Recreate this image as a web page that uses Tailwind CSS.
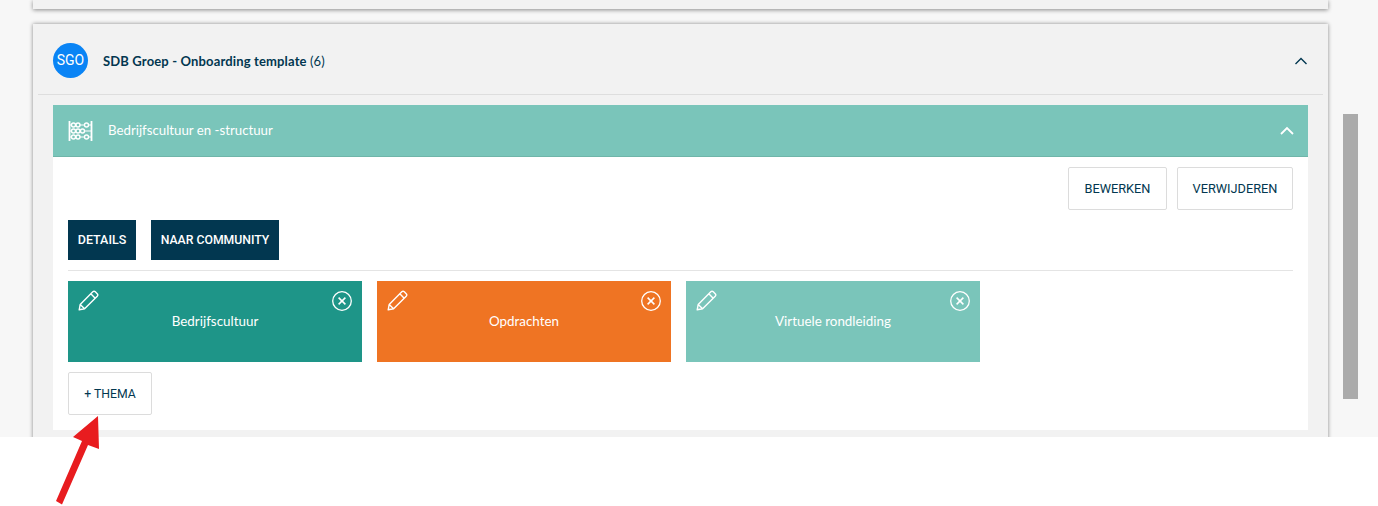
<!DOCTYPE html>
<html lang="nl">
<head>
<meta charset="utf-8">
<title>Onboarding template</title>
<script src="https://cdn.jsdelivr.net/npm/@tailwindcss/browser@4"></script>
</head>
<body class="bg-white font-['Lato','Noto_Sans',sans-serif] text-[#023750]">
<div class="relative h-[506px] w-[1378px] overflow-hidden">
    <div class="h-[437px] overflow-hidden bg-[#f7f7f7] pl-[33px] pr-[50px]">
        <!-- previous card, cut off at the top -->
        <div class="h-[9px] bg-[#f2f2f2] shadow-[0_1px_4px_rgba(0,0,0,0.45)]"></div>

        <div class="mt-[15px] h-[460px] bg-[#f2f2f2] px-[5px] shadow-[0_0_4px_rgba(0,0,0,0.45)]">
            <div class="flex h-[71px] items-center border-b border-[#dedede] pl-[15px] pr-[15px] pt-[3px]">
                <div class="flex h-[35px] w-[35px] items-center justify-center rounded-full bg-[#0a84f5] font-['Roboto',sans-serif] text-[14px] text-white">SGO</div>
                <span class="ml-[15px] mt-[3px] text-[13px] font-bold tracking-[0.15px]">SDB Groep - Onboarding template <span class="font-normal">(6)</span></span>
                <svg class="ml-auto" width="14" height="9" viewBox="0 0 14 9" fill="none" stroke="#023750" stroke-width="1.4"><path d="M1.500 8l5.500-5.500 5.500 5.500"/></svg>
            </div>

            <div class="mx-[15px] mt-[10px]">
                <div class="flex h-[52px] items-center border-b border-[#6fb5a9] bg-[#7ac5ba] pl-[15px] pr-[14px] text-white">
                    <svg width="25" height="22" viewBox="0 0 25 22" fill="none" stroke="#fff" stroke-width="1.4">
                        <path d="M1.500 1v20M23.500 1v20" stroke-width="1.800"/>
                        <path d="M1 5h23M1 11h23M1 17h23" stroke-width="1.200"/>
                        <g fill="#7ac5ba"><circle cx="5.500" cy="5" r="2"/><circle cx="10" cy="5" r="2"/><circle cx="18.500" cy="5" r="2"/><circle cx="5.500" cy="11" r="2"/><circle cx="10" cy="11" r="2"/><circle cx="14.500" cy="11" r="2"/><circle cx="5.500" cy="17" r="2"/><circle cx="10" cy="17" r="2"/><circle cx="18.500" cy="17" r="2"/></g>
                    </svg>
                    <span class="ml-[15px] text-[13.25px]">Bedrijfscultuur en -structuur</span>
                    <svg class="ml-auto" width="14" height="9" viewBox="0 0 14 9" fill="none" stroke="#fff" stroke-width="1.8"><path d="M1 8l6-6 6 6"/></svg>
                </div>

                <div class="h-[273px] bg-white px-[15px] pt-[10px]">
                    <div class="flex justify-end gap-[10px] font-['Roboto',sans-serif]">
                        <button class="h-[43px] w-[99px] rounded-[2px] border border-[#dcdcdc] text-[12.75px]">BEWERKEN</button>
                        <button class="h-[43px] w-[116px] rounded-[2px] border border-[#dcdcdc] text-[12.75px]">VERWIJDEREN</button>
                    </div>
                    <div class="mt-[10px] flex gap-[15px] border-b border-[#e4e4e4] pb-[10px] font-['Roboto',sans-serif]">
                        <button class="h-[40px] w-[68px] bg-[#023750] text-[12.5px] font-medium text-white">DETAILS</button>
                        <button class="h-[40px] w-[128px] bg-[#023750] text-[12.25px] font-medium text-white">NAAR COMMUNITY</button>
                    </div>
                    <div class="mt-[10px] flex gap-[15px]">
                        <div class="relative flex h-[81px] w-[294px] items-center justify-center bg-[#1e9588] text-[13.4px] text-white">
                            <svg class="absolute left-[10px] top-[9px]" width="21" height="21" viewBox="0 0 21 21" fill="none" stroke="#fff" stroke-width="1.4" stroke-linejoin="round"><path d="M1.200 19.800l1-5.400L14.800 1.800a1.800 1.800 0 0 1 2.500 0l1.900 1.900a1.800 1.800 0 0 1 0 2.500L6.600 18.800zM2.200 14.400l4.400 4.400M12.800 3.800l4.400 4.400"/></svg>
                            <svg class="absolute right-[10px] top-[10px]" width="20" height="20" viewBox="0 0 20 20" fill="none" stroke="#fff"><circle cx="10" cy="10" r="9.300" stroke-width="1.300"/><path d="M6.600 6.600l6.800 6.800M13.400 6.600l-6.800 6.800" stroke-width="1.500"/></svg>
                            Bedrijfscultuur
                        </div>
                        <div class="relative flex h-[81px] w-[294px] items-center justify-center bg-[#ef7423] text-[13.4px] text-white">
                            <svg class="absolute left-[10px] top-[9px]" width="21" height="21" viewBox="0 0 21 21" fill="none" stroke="#fff" stroke-width="1.4" stroke-linejoin="round"><path d="M1.200 19.800l1-5.400L14.800 1.800a1.800 1.800 0 0 1 2.500 0l1.900 1.900a1.800 1.800 0 0 1 0 2.500L6.600 18.800zM2.200 14.400l4.400 4.400M12.800 3.800l4.400 4.400"/></svg>
                            <svg class="absolute right-[10px] top-[10px]" width="20" height="20" viewBox="0 0 20 20" fill="none" stroke="#fff"><circle cx="10" cy="10" r="9.300" stroke-width="1.300"/><path d="M6.600 6.600l6.800 6.800M13.400 6.600l-6.800 6.800" stroke-width="1.500"/></svg>
                            Opdrachten
                        </div>
                        <div class="relative flex h-[81px] w-[294px] items-center justify-center bg-[#7ac5ba] text-[13.4px] text-white">
                            <svg class="absolute left-[10px] top-[9px]" width="21" height="21" viewBox="0 0 21 21" fill="none" stroke="#fff" stroke-width="1.4" stroke-linejoin="round"><path d="M1.200 19.800l1-5.400L14.800 1.800a1.800 1.800 0 0 1 2.500 0l1.900 1.900a1.800 1.800 0 0 1 0 2.500L6.600 18.800zM2.200 14.400l4.400 4.400M12.800 3.800l4.400 4.400"/></svg>
                            <svg class="absolute right-[10px] top-[10px]" width="20" height="20" viewBox="0 0 20 20" fill="none" stroke="#fff"><circle cx="10" cy="10" r="9.300" stroke-width="1.300"/><path d="M6.600 6.600l6.800 6.800M13.400 6.600l-6.800 6.800" stroke-width="1.500"/></svg>
                            Virtuele rondleiding
                        </div>
                    </div>
                    <button class="mt-[10px] h-[43px] w-[84px] rounded-[2px] border border-[#dcdcdc] pt-px font-['Roboto',sans-serif] text-[12.25px]">+ THEMA</button>
                </div>
            </div>
        </div>
    </div>

    <!-- scrollbar thumb -->
    <div class="absolute left-[1343px] top-[114px] h-[285px] w-[15px] bg-[#ababab]"></div>

    <!-- annotation arrow -->
    <svg class="absolute left-0 top-0" width="1378" height="506" viewBox="0 0 1378 506">
        <path d="M98 416L73 437L82 441L56 501L62 504.500L88 445L99 449Z" fill="#e81c1f"/>
    </svg>
</div>
</body>
</html>
